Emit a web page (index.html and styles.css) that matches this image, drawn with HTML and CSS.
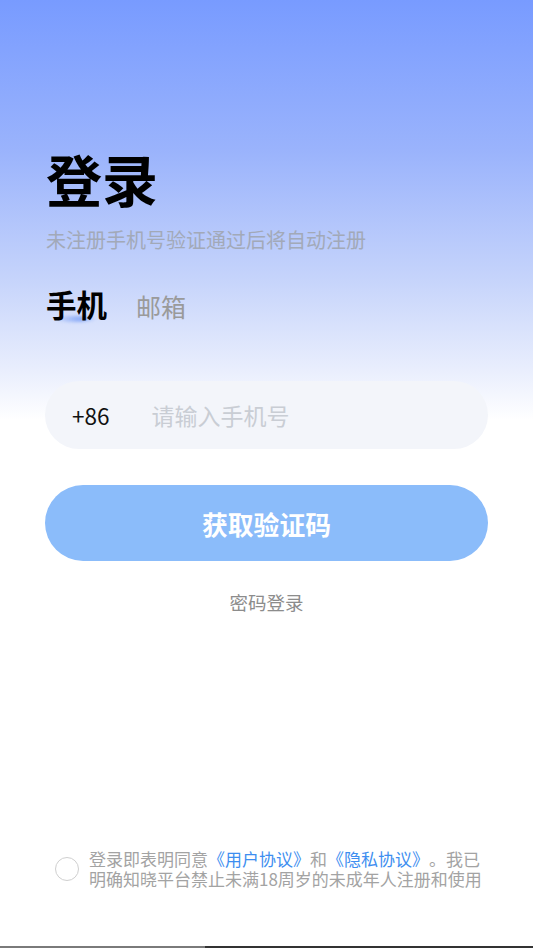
FILE: index.html
```html
<!DOCTYPE html>
<html lang="zh-CN">
<head>
<meta charset="utf-8">
<title>登录</title>
<link rel="stylesheet" href="styles.css">
</head>
<body>
<div class="page">
  <main class="main">
    <h1 class="title">登录</h1>
    <p class="subtitle">未注册手机号验证通过后将自动注册</p>
    <div class="tabs">
      <span class="tab active">手机</span>
      <span class="tab">邮箱</span>
    </div>
    <div class="phone-field">
      <span class="code">+86</span>
      <span class="placeholder">请输入手机号</span>
    </div>
    <button class="submit" type="button">获取验证码</button>
    <div class="alt-login">密码登录</div>
  </main>
  <footer class="agreement">
    <span class="radio"></span>
    <p class="agree-text">登录即表明同意<a class="link">《用户协议》</a>和<a class="link">《隐私协议》</a>。我已明确知晓平台禁止未满18周岁的未成年人注册和使用</p>
  </footer>
  <div class="bottom-edge"><span class="edge-left"></span><span class="edge-right"></span></div>
</div>
</body>
</html>
```

FILE: styles.css
```css
* { box-sizing: border-box; }
html, body { margin: 0; padding: 0; }
body {
  font-family: "Noto Sans CJK SC", "Noto Sans", sans-serif;
  background: #fff;
  text-spacing-trim: space-all;
}
.page {
  width: 533px;
  height: 948px;
  display: flex;
  flex-direction: column;
  background: linear-gradient(180deg, #789bff 0px, #9ab3fc 150px, #c6d4fb 280px, #e9eefd 370px, #ffffff 420px, #ffffff 100%);
}
.main {
  display: flex;
  flex-direction: column;
  padding: 147px 45px 0;
}
.title {
  margin: 0 0 0 1px;
  font-size: 56px;
  line-height: 62px;
  font-weight: 700;
  color: #000;
}
.subtitle {
  margin: 19px 0 0 1px;
  font-size: 20px;
  line-height: 24px;
  color: #a2a9b8;
}
.tabs {
  margin: 34px 0 0 1px;
  display: flex;
  align-items: baseline;
  gap: 29px;
}
.tab {
  font-size: 25px;
  line-height: 36px;
  color: #9a9a9a;
}
.tab.active {
  position: relative;
  font-size: 30.5px;
  font-weight: 700;
  color: #000;
  z-index: 0;
}
.tab.active::after {
  content: "";
  position: absolute;
  left: 9px;
  top: 30px;
  width: 40px;
  height: 6px;
  border-radius: 50%;
  background: linear-gradient(90deg, rgba(150,180,250,0.15), rgba(110,150,245,0.7) 65%, rgba(140,175,250,0.2));
  filter: blur(1.5px);
  z-index: -1;
}
.phone-field {
  margin-top: 57px;
  height: 68px;
  border-radius: 34px;
  background: #f3f5fa;
  display: flex;
  align-items: center;
  padding-left: 27px;
  gap: 42px;
}
.code {
  font-size: 22.5px;
  color: #111;
}
.placeholder {
  font-size: 23px;
  color: #c9cdd4;
}
.submit {
  margin-top: 36px;
  height: 76px;
  border: 0;
  border-radius: 38px;
  background: #8bbcfa;
  color: #fff;
  font-family: inherit;
  font-size: 25.8px;
  font-weight: 700;
  padding: 0;
}
.alt-login {
  margin-top: 29px;
  text-align: center;
  font-size: 18.5px;
  line-height: 24px;
  color: #8c8c8c;
}
.agreement {
  margin-top: auto;
  padding: 0 40px 57px 55px;
  display: flex;
  align-items: center;
  gap: 10px;
}
.radio {
  flex: none;
  width: 24px;
  height: 24px;
  border-radius: 50%;
  border: 1.5px solid #cfcfcf;
}
.agree-text {
  margin: 0;
  font-size: 17px;
  line-height: 20px;
  color: #a3a3a3;
}
.link {
  color: #3d8ef0;
}
.bottom-edge {
  display: flex;
  height: 2px;
}
.edge-left { width: 205px; background: #7a7a7a; }
.edge-right { flex: 1; background: #333; }
```
